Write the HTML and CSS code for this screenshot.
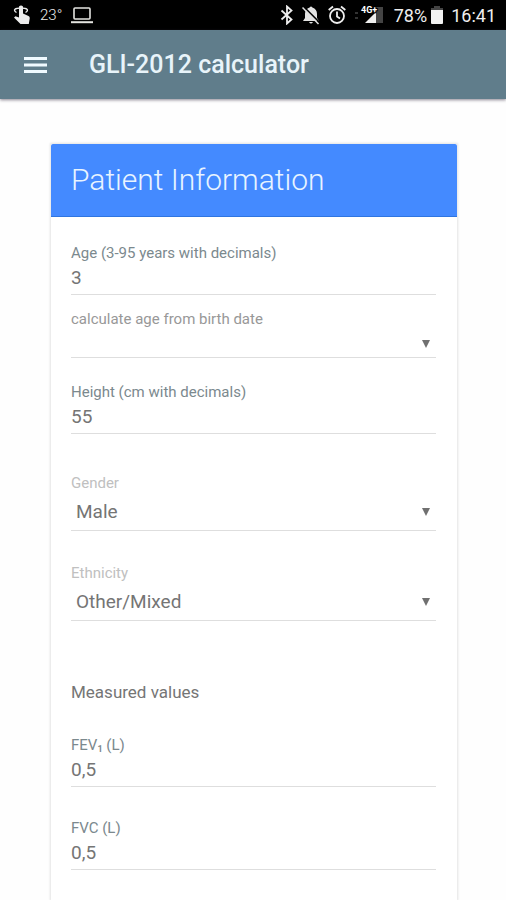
FILE: index.html
```html
<!DOCTYPE html>
<html lang="en">
<head>
<meta charset="utf-8">
<meta name="viewport" content="width=device-width, initial-scale=1">
<title>GLI-2012 calculator</title>
<link rel="stylesheet" href="styles.css">
</head>
<body>
<div class="status">
  <div class="status-group status-left">
    <svg width="18" height="20" viewBox="0 0 18 20" fill="none" stroke="#ececec" aria-hidden="true">
      <path d="M3.500 7.500C-.5 5 2 3 8 3s8.500 2 4.500 4.500" stroke-width="1.400"/>
      <path d="M6 1.500Q8-.5 10 1.500V8.500l5.500 2.500q1.500.8 1.200 2.500L15.800 19H7.500L1 12.500l1.500-1.300 3.500 1.300z" fill="#ececec" stroke="none"/>
    </svg>
    <span class="temp">23°</span>
    <svg width="22" height="17" viewBox="0 0 22 17" fill="none" stroke="#e4e4e0" stroke-width="1.600" aria-hidden="true">
      <rect x="3" y="1" width="16" height="11" rx="1"/>
      <path d="M0 15.200h22" stroke-width="2"/>
    </svg>
  </div>
  <div class="status-group status-right">
    <svg width="14" height="20" viewBox="0 0 14 20" fill="none" stroke="#eee" stroke-width="1.800" aria-hidden="true">
      <path d="M1.500 5.500l10 9L7 18.500v-17l4.500 4-10 9"/>
    </svg>
    <svg width="18" height="20" viewBox="0 0 18 20" aria-hidden="true">
      <path d="M7.600 2.500q1.400-2 2.800 0Q15 4 15 9v4l2 3H1l2-3V9q0-5 4.600-6.500zM7 17h4q-2 3-4 0z" fill="#e4e4e4"/>
      <path d="M1.500 1.500L18 18" stroke="#000" stroke-width="1.600"/>
      <path d="M.5 2.500L16.500 19" stroke="#e4e4e4" stroke-width="1.500"/>
    </svg>
    <svg width="18" height="20" viewBox="0 0 18 20" fill="none" stroke="#eee" stroke-width="1.800" aria-hidden="true">
      <circle cx="9" cy="11" r="7"/>
      <path d="M9 6.500V11.500l3 2M.7 5L5 1.500M17.300 5L13 1.500"/>
    </svg>
    <svg class="signal" width="30" height="20" viewBox="0 0 30 20" aria-hidden="true">
      <path d="M1 7h3v2H1zM1 12h3v2H1z" fill="#333"/>
      <path d="M22 2h7v16h-7z" fill="#444"/>
      <path d="M22 7v11H11z" fill="#eee"/>
      <text class="network" x="7" y="8">4G+</text>
    </svg>
    <span class="battery-level">78%</span>
    <svg width="12" height="18" viewBox="0 0 12 18" aria-hidden="true">
      <path d="M3 0h6v2h3v2H0V2h3z" fill="#444"/>
      <path d="M0 4h12v13q0 1-1 1H1q-1 0-1-1z" fill="#f2f2f2"/>
    </svg>
    <time class="clock">16:41</time>
  </div>
</div>
<header class="appbar">
  <button class="menu" type="button" aria-label="Menu">
    <svg width="24" height="18" viewBox="0 0 24 18" fill="none" stroke="#f0faff" stroke-width="3" aria-hidden="true"><path d="M0 2.500h23M0 9h23M0 15.500h23"/></svg>
  </button>
  <h1 class="title">GLI-2012 calculator</h1>
</header>
<main class="content">
  <form class="card">
    <h2 class="card-head">Patient Information</h2>
    <div class="fields">
      <div class="field">
        <label class="label" for="age">Age (3-95 years with decimals)</label>
        <input class="control" id="age" type="text" value="3">
      </div>
      <div class="field field-birth">
        <label class="label label-grey" for="birth">calculate age from birth date</label>
        <div class="picker">
          <select class="control" id="birth"><option></option></select>
          <svg class="arrow" width="8" height="8" viewBox="0 0 8 8" aria-hidden="true"><path d="M0 0h8L4 8z"/></svg>
        </div>
      </div>
      <div class="field field-height">
        <label class="label" for="height">Height (cm with decimals)</label>
        <input class="control" id="height" type="text" value="55">
      </div>
      <div class="field field-choice">
        <label class="label label-pale" for="gender">Gender</label>
        <div class="picker">
          <select class="control" id="gender"><option>Male</option><option>Female</option></select>
          <svg class="arrow" width="8" height="8" viewBox="0 0 8 8" aria-hidden="true"><path d="M0 0h8L4 8z"/></svg>
        </div>
      </div>
      <div class="field field-choice">
        <label class="label label-pale" for="ethnicity">Ethnicity</label>
        <div class="picker">
          <select class="control" id="ethnicity"><option>Other/Mixed</option></select>
          <svg class="arrow" width="8" height="8" viewBox="0 0 8 8" aria-hidden="true"><path d="M0 0h8L4 8z"/></svg>
        </div>
      </div>
      <h3 class="section">Measured values</h3>
      <div class="field">
        <label class="label" for="fev">FEV<sub>1</sub> (L)</label>
        <input class="control" id="fev" type="text" value="0,5">
      </div>
      <div class="field field-measure">
        <label class="label" for="fvc">FVC (L)</label>
        <input class="control" id="fvc" type="text" value="0,5">
      </div>
    </div>
  </form>
</main>
</body>
</html>
```
FILE: styles.css
```css
* { box-sizing: border-box; }
body {
  margin: 0;
  min-height: 100vh;
  display: flex;
  flex-direction: column;
  background: #fefefe;
  color: #757575;
  font-family: Roboto, sans-serif;
}
h1, h2, h3 { margin: 0; }
svg { display: block; flex: none; }

.status {
  height: 30px;
  padding: 0 10px 0 13px;
  display: flex;
  align-items: center;
  justify-content: space-between;
  background: #000;
  color: #eee;
}
.status-group { display: flex; align-items: center; }
.status-left { gap: 9px; }
.status-right { gap: 8px; }
.temp { font-size: 15px; font-weight: 300; }
.network { font-size: 9px; font-weight: 700; fill: #fff; stroke: #000; stroke-width: 2px; paint-order: stroke; }
.battery-level, .clock { font-size: 18px; }
.battery-level { margin: 0 -4px 0 2px; }

.appbar {
  height: 69px;
  padding: 0 24px;
  display: flex;
  align-items: center;
  gap: 41px;
  background: #607d8b;
  box-shadow: 0 1px 3px rgba(60, 50, 70, .6);
}
.menu { padding: 0; border: 0; background: none; }
.title { color: #e8f4fa; font-size: 25px; font-weight: 500; }

.content { flex: 1; display: flex; padding: 45px 49px 0 51px; }
.card {
  flex: 1;
  background: #fff;
  box-shadow: 0 0 2px 1px #e4e4e4;
}
.card-head {
  height: 73px;
  padding: 0 20px;
  border-bottom: 1px solid #2f75e0;
  border-radius: 2px 2px 0 0;
  background: #448aff;
  color: #e8f4ff;
  font-size: 30px;
  font-weight: 300;
  line-height: 72px;
}
.fields { padding: 26px 21px 28px 20px; }
.field { display: flex; flex-direction: column; }
.label { color: #7b898e; font-size: 15px; line-height: 20px; }
.label sub { font-size: 9px; font-weight: 700; line-height: 0; vertical-align: -2px; }
.label-grey { color: #989898; }
.label-pale { color: #c0c0c0; }
.control {
  width: 100%;
  height: 32px;
  padding: 0 0 2px;
  border: 0;
  border-bottom: 1px solid #dedede;
  border-radius: 0;
  background: transparent;
  color: #757575;
  font: 400 19px Roboto, sans-serif;
  appearance: none;
  outline: 0;
}
.picker { display: grid; align-items: center; }
.picker > * { grid-area: 1 / 1; }
.picker .control { height: 38px; padding: 0 24px 0 5px; }
.arrow { justify-self: end; margin-right: 6px; fill: #707070; pointer-events: none; }
.field-birth { margin-top: 14px; }
.field-birth .picker .control { height: 29px; }
.field-height { margin-top: 24px; }
.field-choice { margin-top: 32px; }
.field-height + .field-choice { margin-top: 39px; }
.section { margin: 59px 0 31px; font-size: 17px; font-weight: 400; line-height: 24px; }
.field-measure { margin-top: 31px; }
```
